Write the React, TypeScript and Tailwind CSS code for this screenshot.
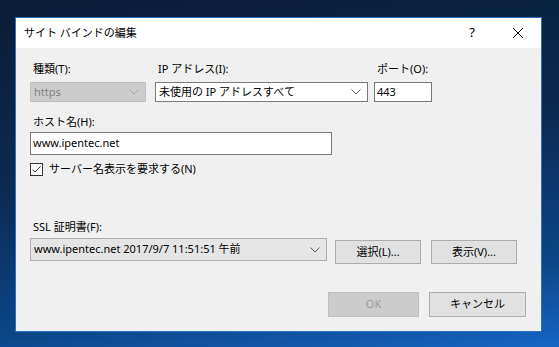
import React from 'react';

const Chevron: React.FC<{ color?: string }> = ({ color = '#606060' }) => (
    <svg width="10" height="6" viewBox="0 0 10 6" className="shrink-0">
        <polyline points="0.5,0.5 5,5 9.5,0.5" fill="none" stroke={color} strokeWidth="1" />
    </svg>
);

const Label: React.FC<{ children: React.ReactNode; className?: string }> = ({ children, className = '' }) => (
    <div className={`h-[16px] leading-[16px] pl-[3px] text-black whitespace-nowrap ${className}`}>{children}</div>
);

export default function App() {
    return (
        <div className="w-[559px] h-[347px] overflow-hidden pt-[17px] pl-[15px] text-[11px] font-['Noto_Sans','Noto_Sans_CJK_JP',sans-serif] bg-[linear-gradient(172deg,#0a1d36_0%,#0b2a52_45%,#0c4689_80%,#1566c4_100%)]">
            <div className="w-[527px] h-[315px] border border-[#2c6fbd] bg-[#f0f0f0] flex flex-col">
                {/* Title bar */}
                <div className="h-[30px] bg-white flex items-center shrink-0">
                    <span className="pl-[8px] text-black">サイト バインドの編集</span>
                    <div className="ml-auto w-[46px] h-full flex items-center justify-center text-black text-[13px]">?</div>
                    <div className="w-[46px] h-full flex items-center justify-center">
                        <svg width="10" height="10" viewBox="0 0 10 10">
                            <line x1="0" y1="0" x2="10" y2="10" stroke="#000" strokeWidth="1" />
                            <line x1="10" y1="0" x2="0" y2="10" stroke="#000" strokeWidth="1" />
                        </svg>
                    </div>
                </div>

                {/* Body */}
                <div className="flex-1 flex flex-col pl-[14px] pt-[13px]">
                    <div className="flex">
                        <div className="w-[116px] flex flex-col">
                            <Label className="mb-[5px]">種類(T):</Label>
                            <div className="h-[20px] border border-[#bfbfbf] bg-[#cccccc] flex items-center pl-[3px] pr-[6px] text-[#838383]">
                                <span>https</span>
                                <span className="ml-auto"><Chevron color="#a8a8a8" /></span>
                            </div>
                        </div>
                        <div className="ml-[9px] w-[213px] flex flex-col">
                            <Label className="mb-[5px]">IP アドレス(I):</Label>
                            <div className="h-[20px] border border-[#7a7a7a] bg-white flex items-center pl-[3px] pr-[6px] text-black">
                                <span>未使用の IP アドレスすべて</span>
                                <span className="ml-auto"><Chevron /></span>
                            </div>
                        </div>
                        <div className="ml-[6px] w-[58px] flex flex-col">
                            <Label className="mb-[5px] pl-0">ポート(O):</Label>
                            <div className="h-[20px] border border-[#7a7a7a] bg-white flex items-center pl-[2px] text-black">443</div>
                        </div>
                    </div>

                    <Label className="mt-[12px] mb-[2px]">ホスト名(H):</Label>
                    <div className="w-[302px] h-[23px] border border-[#7a7a7a] bg-white flex items-center pl-[2px] text-black">
                        www.ipentec.net
                    </div>

                    <div className="mt-[8px] flex items-center h-[13px]">
                        <div className="w-[13px] h-[13px] border border-[#333333] bg-white flex items-center justify-center">
                            <svg width="11" height="11" viewBox="0 0 11 11">
                                <polyline points="1.5,5.5 4,8 9.5,2.5" fill="none" stroke="#333333" strokeWidth="1" />
                            </svg>
                        </div>
                        <span className="ml-[6px] text-black whitespace-nowrap">サーバー名表示を要求する(N)</span>
                    </div>

                    <Label className="mt-[43px] mb-[3px]">SSL 証明書(F):</Label>
                    <div className="flex items-start">
                        <div className="w-[297px] h-[23px] border border-[#adadad] bg-[#e5e5e5] flex items-center pl-[3px] pr-[6px] text-black">
                            <span className="whitespace-nowrap">www.ipentec.net 2017/9/7 11:51:51 午前</span>
                            <span className="ml-auto"><Chevron /></span>
                        </div>
                        <button className="ml-[8px] mt-[2px] w-[86px] h-[24px] border border-[#adadad] bg-[#e1e1e1] text-black">選択(L)...</button>
                        <button className="ml-[10px] mt-[2px] w-[86px] h-[24px] border border-[#adadad] bg-[#e1e1e1] text-black">表示(V)...</button>
                    </div>

                    <div className="mt-[28px] flex justify-end pr-[15px]">
                        <button className="w-[91px] h-[25px] border border-[#bfbfbf] bg-[#cccccc] text-[#a0a0a0]">OK</button>
                        <button className="ml-[10px] w-[97px] h-[25px] border border-[#adadad] bg-[#e1e1e1] text-black">キャンセル</button>
                    </div>
                </div>
            </div>
        </div>
    );
}
